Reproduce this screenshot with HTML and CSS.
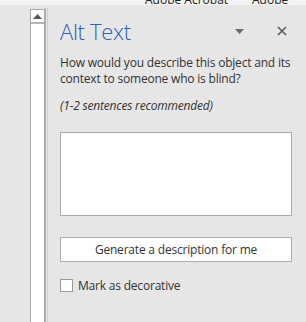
FILE: index.html
```html
<!DOCTYPE html>
<html lang="en">
<head>
  <meta charset="UTF-8">
  <title>Alt Text</title>
  <link rel="stylesheet" href="styles.css">
</head>
<body>
  <div class="topbar">
    <span class="tab tab-a">Adobe Acrobat</span>
    <span class="tab tab-b">Adobe</span>
  </div>
  <div class="main">
    <div class="gutter"></div>
    <div class="scroll">
      <div class="scroll-up">
        <svg width="9" height="5" viewBox="0 0 9 5"><path d="M0 5 L4.5 0 L9 5 Z" fill="#555"/></svg>
      </div>
      <div class="track"></div>
    </div>
    <div class="divider"></div>
    <div class="pane">
      <div class="pane-head">
        <h2>Alt Text</h2>
        <div class="pane-tools">
          <svg class="drop" width="9" height="5" viewBox="0 0 9 5"><path d="M0 0 L9 0 L4.5 5 Z" fill="#6b6b6b"/></svg>
          <svg class="close" width="10" height="10" viewBox="0 0 10 10"><path d="M1 1 L9 9 M9 1 L1 9" stroke="#5a5a5a" stroke-width="1.6"/></svg>
        </div>
      </div>
      <p class="question">How would you describe this object and its context to someone who is blind?</p>
      <p class="hint">(1-2 sentences recommended)</p>
      <textarea class="desc"></textarea>
      <button class="gen">Generate a description for me</button>
      <label class="deco"><span class="box"></span>Mark as decorative</label>
    </div>
  </div>
</body>
</html>
```

FILE: styles.css
```css
body {
  margin: 0;
  padding: 0;
  background: #e6e6e6;
  color: #333;
  font-family: "Open Sans", "Noto Sans", Arial, sans-serif;
  font-size: 12px;
  height: 322px;
  overflow: hidden;
}
.topbar {
  height: 5px;
  background: #f3f3f3;
  overflow: hidden;
  position: relative;
}
.tab {
  position: absolute;
  top: -9px;
  font-size: 12px;
  color: #222;
}
.tab-a { left: 145px; }
.tab-b { left: 252px; }
.main {
  display: flex;
  height: 317px;
}
.gutter {
  width: 30px;
}
.scroll {
  width: 13px;
  margin-top: 4px;
  border: 1px solid #a8a8a8;
  border-bottom: none;
  background: #fff;
  display: flex;
  flex-direction: column;
}
.scroll-up {
  height: 12px;
  border-bottom: 2px solid #b4b4b4;
  display: flex;
  align-items: center;
  justify-content: center;
}
.track {
  flex: 1;
}
.divider {
  width: 1px;
  border-left: 1px solid #b0b0b0;
  border-right: 1px solid #d0d0d0;
  margin-top: 3px;
}
.pane {
  flex: 1;
  padding: 0 12px 0 12px;
  letter-spacing: -0.2px;
}
.pane-head {
  display: flex;
  align-items: center;
  justify-content: space-between;
  padding-top: 13px;
}
.pane-head h2 {
  margin: 0;
  font-weight: 300;
  font-size: 22px;
  line-height: 26px;
  letter-spacing: -0.3px;
  color: #2e5fb5;
}
.pane-tools {
  display: flex;
  align-items: center;
  gap: 33px;
  padding-right: 7px;
}
.question {
  margin: 11px 0 0;
  line-height: 16px;
}
.hint {
  margin: 10px 0 0;
  font-style: italic;
}
.desc {
  display: block;
  width: 232px;
  height: 84px;
  box-sizing: border-box;
  margin-top: 18px;
  border: 1px solid #ababab;
  background: #fff;
  resize: none;
}
.gen {
  display: block;
  width: 232px;
  height: 25px;
  margin-top: 21px;
  background: #fff;
  border: 1px solid #adadad;
  font-family: inherit;
  font-size: 12px;
  letter-spacing: -0.2px;
  color: #333;
}
.deco {
  display: flex;
  align-items: center;
  gap: 5px;
  margin-top: 15px;
}
.box {
  width: 11px;
  height: 11px;
  border: 1px solid #999;
  background: #fff;
}
```
